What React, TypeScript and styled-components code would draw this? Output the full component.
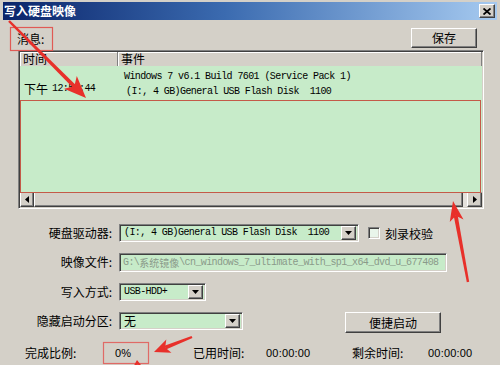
import styled, { createGlobalStyle, css } from "styled-components";

const GlobalStyle = createGlobalStyle`
  html, body {
    margin: 0;
    padding: 0;
    overflow: hidden;
    background: #d4d0c8;
  }
`;

const raised = css`
  box-sizing: border-box;
  background: #d4d0c8;
  border: 1px solid;
  border-color: #ffffff #404040 #404040 #ffffff;
  box-shadow: inset -1px -1px 0 #808080;
`;

const sunken = css`
  box-sizing: border-box;
  border: 1px solid;
  border-color: #808080 #ffffff #ffffff #808080;
  box-shadow: inset 1px 1px 0 #404040, inset -1px -1px 0 #d4d0c8;
`;

const Window = styled.div`
  position: relative;
  width: 500px;
  height: 365px;
  overflow: hidden;
  background: #d4d0c8;
  font-family: "Noto Sans CJK SC", "DejaVu Sans", sans-serif;
  font-size: 12px;
  color: #000;
`;

const TitleBar = styled.div`
  display: flex;
  align-items: center;
  justify-content: space-between;
  height: 18px;
  margin: 2px 3px 0;
  padding: 0 2px 0 1px;
  background: linear-gradient(90deg, #0a246a 0%, #3b6bb0 45%, #a6caf0 100%);
`;

const Title = styled.span`
  color: #fff;
  font-weight: bold;
  font-size: 12px;
  line-height: 18px;
`;

const CloseButton = styled.div`
  ${raised};
  width: 16px;
  height: 14px;
  display: flex;
  align-items: center;
  justify-content: center;
`;

const TopRow = styled.div`
  display: flex;
  justify-content: space-between;
  align-items: flex-start;
  height: 30px;
  box-sizing: border-box;
  padding: 8px 23px 0 17px;
`;

const PlainLabel = styled.span`
  margin-top: 4px;
  line-height: 14px;
`;

const PushButton = styled.div<{ $w: number; $h: number; $ml?: number }>`
  ${raised};
  width: ${({ $w }) => $w}px;
  height: ${({ $h }) => $h}px;
  margin-left: ${({ $ml }) => $ml ?? 0}px;
  display: flex;
  align-items: center;
  justify-content: center;
  font-size: 12px;
  line-height: 14px;
`;

const ListView = styled.div`
  ${sunken};
  margin-left: 18px;
  width: 466px;
  height: 159px;
  padding: 1px;
  display: flex;
  flex-direction: column;
`;

const ListHeader = styled.div`
  display: flex;
  height: 14px;
  background: #d4d0c8;
`;

const HeaderCell = styled.div<{ $w?: number }>`
  box-sizing: border-box;
  ${({ $w }) => ($w ? `width: ${$w}px;` : "flex: 1;")}
  height: 14px;
  padding-left: 3px;
  line-height: 14px;
  font-size: 12px;
  border-right: 1px solid #808080;
  box-shadow: inset 1px 1px 0 #ffffff;
  white-space: nowrap;
`;

const ListBody = styled.div`
  flex: 1;
  background: #c7ebc9;
`;

const ListRow = styled.div`
  display: flex;
  align-items: center;
  height: 15px;
`;

const TimeCell = styled.div`
  width: 98px;
  padding-left: 4px;
  box-sizing: border-box;
  display: flex;
  align-items: center;
  gap: 4px;
  white-space: nowrap;
`;

const Mono = styled.span<{ $size?: number; $color?: string }>`
  font-family: "Liberation Mono", "DejaVu Sans Mono", monospace;
  font-size: ${({ $size }) => $size ?? 10}px;
  letter-spacing: -0.6px;
  color: ${({ $color }) => $color ?? "#000"};
  white-space: pre;
`;

const EventCell = styled.div<{ $pad: number }>`
  padding-left: ${({ $pad }) => $pad}px;
  white-space: pre;
`;

const ScrollBar = styled.div`
  display: flex;
  height: 15px;
  background: #e4e1dc;
`;

const ScrollButton = styled.div<{ $w: number }>`
  ${raised};
  width: ${({ $w }) => $w}px;
  height: 15px;
  display: flex;
  align-items: center;
  justify-content: center;
`;

const ScrollThumb = styled.div`
  ${raised};
  flex: 1;
  height: 15px;
  margin-right: 4px;
`;

const Form = styled.div`
  display: flex;
  flex-direction: column;
  gap: 11px;
  margin-top: 15px;
`;

const FormRow = styled.div`
  display: flex;
  align-items: flex-start;
  min-height: 18px;
`;

const FieldLabel = styled.div`
  width: 112px;
  margin-right: 7px;
  text-align: right;
  line-height: 18px;
  white-space: nowrap;
`;

const Combo = styled.div<{ $w: number }>`
  ${sunken};
  width: ${({ $w }) => $w}px;
  height: 18px;
  padding: 2px 2px 2px 4px;
  background: #c7ebc9;
  display: flex;
  align-items: center;
  justify-content: space-between;
  line-height: 14px;
`;

const DropButton = styled.div`
  ${raised};
  width: 15px;
  height: 14px;
  display: flex;
  align-items: center;
  justify-content: center;
  flex-shrink: 0;
`;

const TextField = styled.div<{ $w: number }>`
  ${sunken};
  width: ${({ $w }) => $w}px;
  height: 19px;
  padding: 2px 3px;
  background: #c7ebc9;
  display: flex;
  align-items: center;
  overflow: hidden;
  color: #8a9a8a;
  font-size: 10px;
  white-space: pre;
`;

const CheckRow = styled.label`
  display: flex;
  align-items: center;
  gap: 5px;
  margin-left: 9px;
  height: 18px;
`;

const CheckBox = styled.span`
  ${sunken};
  width: 12px;
  height: 12px;
  background: #e9f5ea;
`;

const StatusRow = styled.div`
  display: grid;
  grid-template-columns: 78px 90px 73px 86px 76px auto;
  align-items: center;
  height: 21px;
  margin-top: 9px;
  padding-left: 25px;
`;

const StatusValue = styled.span<{ $pad?: number }>`
  padding-left: ${({ $pad }) => $pad ?? 0}px;
  font-family: "Liberation Sans", Arial, sans-serif;
  font-size: 11px;
  letter-spacing: 0.2px;
`;

const Overlay = styled.svg`
  position: absolute;
  left: 0;
  top: 0;
  pointer-events: none;
`;

const Tri = ({ dir }: { dir: "down" | "left" | "right" }) => {
  const pts =
    dir === "down" ? "0,0 7,0 3.5,4" : dir === "left" ? "4,0 4,7 0,3.5" : "0,0 0,7 4,3.5";
  const w = dir === "down" ? 7 : 4;
  const h = dir === "down" ? 4 : 7;
  return (
    <svg width={w} height={h} viewBox={`0 0 ${w} ${h}`}>
      <polygon points={pts} fill="#000" />
    </svg>
  );
};

const Arrow = ({
  x1, y1, x2, y2, len, half, w,
}: { x1: number; y1: number; x2: number; y2: number; len: number; half: number; w: number }) => {
  const dx = x2 - x1;
  const dy = y2 - y1;
  const L = Math.hypot(dx, dy);
  const ux = dx / L;
  const uy = dy / L;
  const bx = x2 - ux * len;
  const by = y2 - uy * len;
  const nx = x2 - ux * len * 0.75;
  const ny = y2 - uy * len * 0.75;
  const px = -uy;
  const py = ux;
  return (
    <g fill="#e8302a" stroke="none">
      <polygon
        points={`${x1 - px * w * 0.3},${y1 - py * w * 0.3} ${x1 + px * w * 0.3},${y1 + py * w * 0.3} ${nx + px * w / 2},${ny + py * w / 2} ${nx - px * w / 2},${ny - py * w / 2}`}
      />
      <polygon
        points={`${x2},${y2} ${bx + px * half},${by + py * half} ${nx},${ny} ${bx - px * half},${by - py * half}`}
      />
    </g>
  );
};

export default function App() {
  return (
    <Window>
      <GlobalStyle />
      <TitleBar>
        <Title>写入硬盘映像</Title>
        <CloseButton>
          <svg width="8" height="7" viewBox="0 0 8 7">
            <path d="M0.5 0.5 L7.5 6.5 M7.5 0.5 L0.5 6.5" stroke="#000" strokeWidth="1.8" />
          </svg>
        </CloseButton>
      </TitleBar>

      <TopRow>
        <PlainLabel>消息:</PlainLabel>
        <PushButton $w={66} $h={20}>保存</PushButton>
      </TopRow>

      <ListView>
        <ListHeader>
          <HeaderCell $w={98}>时间</HeaderCell>
          <HeaderCell>事件</HeaderCell>
        </ListHeader>
        <ListBody>
          <ListRow>
            <TimeCell />
            <EventCell $pad={6}>
              <Mono>Windows 7 v6.1 Build 7601 (Service Pack 1)</Mono>
            </EventCell>
          </ListRow>
          <ListRow>
            <TimeCell>
              <span>下午</span>
              <Mono>12:58:44</Mono>
            </TimeCell>
            <EventCell $pad={8}>
              <Mono>(I:, 4 GB)General USB Flash Disk  1100</Mono>
            </EventCell>
          </ListRow>
        </ListBody>
        <ScrollBar>
          <ScrollButton $w={14}>
            <Tri dir="left" />
          </ScrollButton>
          <ScrollThumb />
          <ScrollButton $w={15}>
            <Tri dir="right" />
          </ScrollButton>
        </ScrollBar>
      </ListView>

      <Form>
        <FormRow>
          <FieldLabel>硬盘驱动器:</FieldLabel>
          <Combo $w={240}>
            <Mono>(I:, 4 GB)General USB Flash Disk  1100</Mono>
            <DropButton>
              <Tri dir="down" />
            </DropButton>
          </Combo>
          <CheckRow>
            <CheckBox />
            <span>刻录校验</span>
          </CheckRow>
        </FormRow>
        <FormRow>
          <FieldLabel>映像文件:</FieldLabel>
          <TextField $w={328}>
            <Mono $color="#8a9a8a">G:\</Mono>
            <span>系统镜像</span>
            <Mono $color="#8a9a8a">\cn_windows_7_ultimate_with_sp1_x64_dvd_u_677408</Mono>
          </TextField>
        </FormRow>
        <FormRow>
          <FieldLabel>写入方式:</FieldLabel>
          <Combo $w={87}>
            <Mono>USB-HDD+</Mono>
            <DropButton>
              <Tri dir="down" />
            </DropButton>
          </Combo>
        </FormRow>
        <FormRow>
          <FieldLabel>隐藏启动分区:</FieldLabel>
          <Combo $w={124}>
            <span>无</span>
            <DropButton>
              <Tri dir="down" />
            </DropButton>
          </Combo>
          <PushButton $w={96} $h={21} $ml={102}>便捷启动</PushButton>
        </FormRow>
      </Form>

      <StatusRow>
        <span>完成比例:</span>
        <StatusValue $pad={12}>0%</StatusValue>
        <span>已用时间:</span>
        <StatusValue>00:00:00</StatusValue>
        <span>剩余时间:</span>
        <StatusValue>00:00:00</StatusValue>
      </StatusRow>

      <Overlay width="500" height="365" viewBox="0 0 500 365">
        <rect x="10.5" y="27.5" width="42" height="23" fill="none" stroke="#e05a55" strokeWidth="1.2" />
        <rect x="20.5" y="100.5" width="460" height="92" fill="none" stroke="#c45a48" strokeWidth="1" />
        <rect x="103.5" y="342.5" width="45" height="21" fill="none" stroke="#e06a66" strokeWidth="1.2" />
        <Arrow x1={9} y1={21} x2={86} y2={98} len={22} half={9} w={4} />
        <Arrow x1={468} y1={282} x2={453} y2={201} len={20} half={7} w={4} />
        <Arrow x1={192} y1={337} x2={154} y2={352} len={16} half={7} w={4} />
        <Arrow x1={138} y1={372} x2={137} y2={360} len={6} half={4} w={3} />
      </Overlay>
    </Window>
  );
}
